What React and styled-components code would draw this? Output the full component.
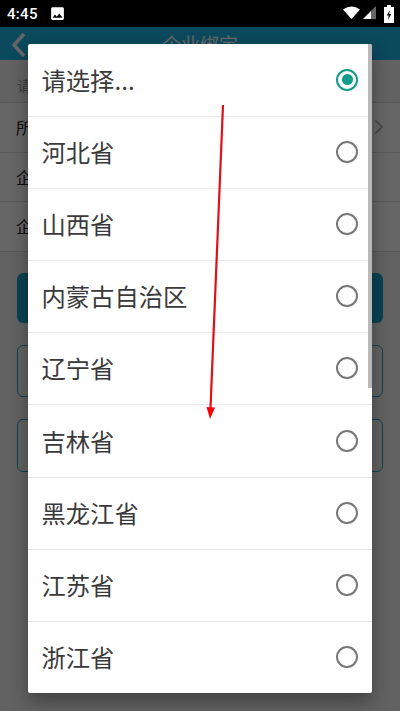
import React from 'react';
import styled, { createGlobalStyle } from 'styled-components';
import { MdImage } from 'react-icons/md';

const provinces = ['请选择...', '河北省', '山西省', '内蒙古自治区', '辽宁省', '吉林省', '黑龙江省', '江苏省', '浙江省'];

const Global = createGlobalStyle`
  html, body { margin: 0; padding: 0; background: #000; }
  body { font-family: "Roboto", "Noto Sans CJK SC", sans-serif; }
  * { box-sizing: border-box; }
`;

const Screen = styled.div`
  position: relative;
  width: 400px;
  height: 711px;
  overflow: hidden;
  background: #f4f4f4;
`;

const StatusBar = styled.div`
  position: relative;
  z-index: 3;
  height: 27px;
  background: #000;
  color: #fff;
  display: flex;
  align-items: center;
  padding: 0 6px 0 7px;
  font-size: 15px;
  font-weight: 500;
`;

const Clock = styled.span`
  margin-right: 11px;
  letter-spacing: 0.3px;
`;

const StatusIcons = styled.div`
  margin-left: auto;
  display: flex;
  align-items: center;
  gap: 8px;
`;

const Header = styled.div`
  height: 33px;
  background: #1cb6e8;
  color: #fff;
  display: flex;
  align-items: center;
  justify-content: center;
  position: relative;
  font-size: 19px;
`;

const BackIcon = styled.svg`
  position: absolute;
  left: 11px;
  top: 5px;
`;

const Hint = styled.div`
  height: 42px;
  padding: 8px 17px 0;
  font-size: 14px;
  color: #999;
  display: flex;
  align-items: center;
`;

const FormRow = styled.div`
  height: 49.5px;
  padding: 0 16px;
  background: #fff;
  border-top: 1px solid #ddd;
  display: flex;
  align-items: center;
  justify-content: space-between;
  font-size: 16px;
  color: #222;
`;

const FormEnd = styled.div`
  border-top: 1px solid #ddd;
`;

const Submit = styled.div`
  margin: 21px 17px 0;
  height: 50px;
  border-radius: 6px;
  background: #17a6cc;
`;

const Outlined = styled.div`
  margin: 22px 17px 0;
  height: ${p => p.$h}px;
  border-radius: 6px;
  border: 1px solid #17a6cc;
`;

const Scrim = styled.div`
  position: absolute;
  inset: 27px 0 0;
  z-index: 1;
  background: rgba(0, 0, 0, 0.6);
`;

const Dialog = styled.div`
  position: absolute;
  z-index: 2;
  left: 28px;
  top: 44px;
  width: 344px;
  height: 649px;
  padding-top: 0.5px;
  background: #fff;
  border-radius: 2px;
  box-shadow: 0 8px 18px rgba(0, 0, 0, 0.35);
  overflow: hidden;
`;

const Option = styled.div`
  height: 72.2px;
  padding: 0 14px 1px 13.5px;
  display: flex;
  align-items: center;
  justify-content: space-between;
  border-bottom: 1px solid #e8e8e8;
  font-family: "Noto Sans CJK SC", sans-serif;
  &:last-of-type { border-bottom: none; }
`;

const OptionLabel = styled.span`
  padding-bottom: 1px;
  font-size: 24.3px;
  color: #3a3a3a;
`;

const Radio = styled.span`
  width: 22px;
  height: 22px;
  border-radius: 50%;
  border: 2px solid ${p => (p.$on ? '#129c8b' : '#777')};
  display: flex;
  align-items: center;
  justify-content: center;
  &::after {
    content: '';
    width: 11px;
    height: 11px;
    border-radius: 50%;
    background: ${p => (p.$on ? '#129c8b' : 'transparent')};
  }
`;

const ScrollThumb = styled.div`
  position: absolute;
  right: 0;
  top: 0;
  width: 4px;
  height: 344px;
  background: #b9b9b9;
`;

const Arrow = styled.svg`
  position: absolute;
  z-index: 4;
  left: 0;
  top: 0;
  pointer-events: none;
`;

export default function App() {
  return (
    <Screen>
      <Global />
      <StatusBar>
        <Clock>4:45</Clock>
        <MdImage size={17} />
        <StatusIcons>
          <svg width="33" height="18" viewBox="0 0 33 18">
            <path d="M0 4.5 Q8.5 -1.5 17 4.5 L8.5 14 Z" fill="#fff" />
            <path d="M20 14 L33 1 V14 Z" fill="#666" />
            <path d="M20 14 L28 6 V14 Z" fill="#fff" />
          </svg>
          <svg width="10" height="18" viewBox="0 0 10 18">
            <path d="M3 0 H7 V2 H10 V18 H0 V2 H3 Z" fill="#fff" />
            <path d="M5.8 5 L2.8 10.5 H4.8 L4 15 L7.2 9 H5.2 Z" fill="#000" />
          </svg>
        </StatusIcons>
      </StatusBar>
      <Header>
        <BackIcon width="16" height="26" viewBox="0 0 16 26">
          <path d="M13 2 L3 13 L13 24" fill="none" stroke="#fff" strokeWidth="3.5" />
        </BackIcon>
        企业绑定
      </Header>
      <Hint>请选择所在地区</Hint>
      <FormRow>
        所在地区
        <svg width="10" height="16" viewBox="0 0 10 16">
          <path d="M1.5 1.5 L8 8 L1.5 14.5" fill="none" stroke="#aaa" strokeWidth="1.6" />
        </svg>
      </FormRow>
      <FormRow>企业名称</FormRow>
      <FormRow>企业代码</FormRow>
      <FormEnd />
      <Submit />
      <Outlined $h={52} />
      <Outlined $h={53} />
      <Scrim />
      <Dialog>
        {provinces.map((name, i) => (
          <Option key={name}>
            <OptionLabel>{name}</OptionLabel>
            <Radio $on={i === 0} />
          </Option>
        ))}
        <ScrollThumb />
      </Dialog>
      <Arrow width="400" height="711" viewBox="0 0 400 711">
        <path d="M223 105 L210.5 408" fill="none" stroke="#e0101a" strokeWidth="2.2" />
        <path d="M206.5 407 L215 407.5 L210 419 Z" fill="#f00" />
      </Arrow>
    </Screen>
  );
}
